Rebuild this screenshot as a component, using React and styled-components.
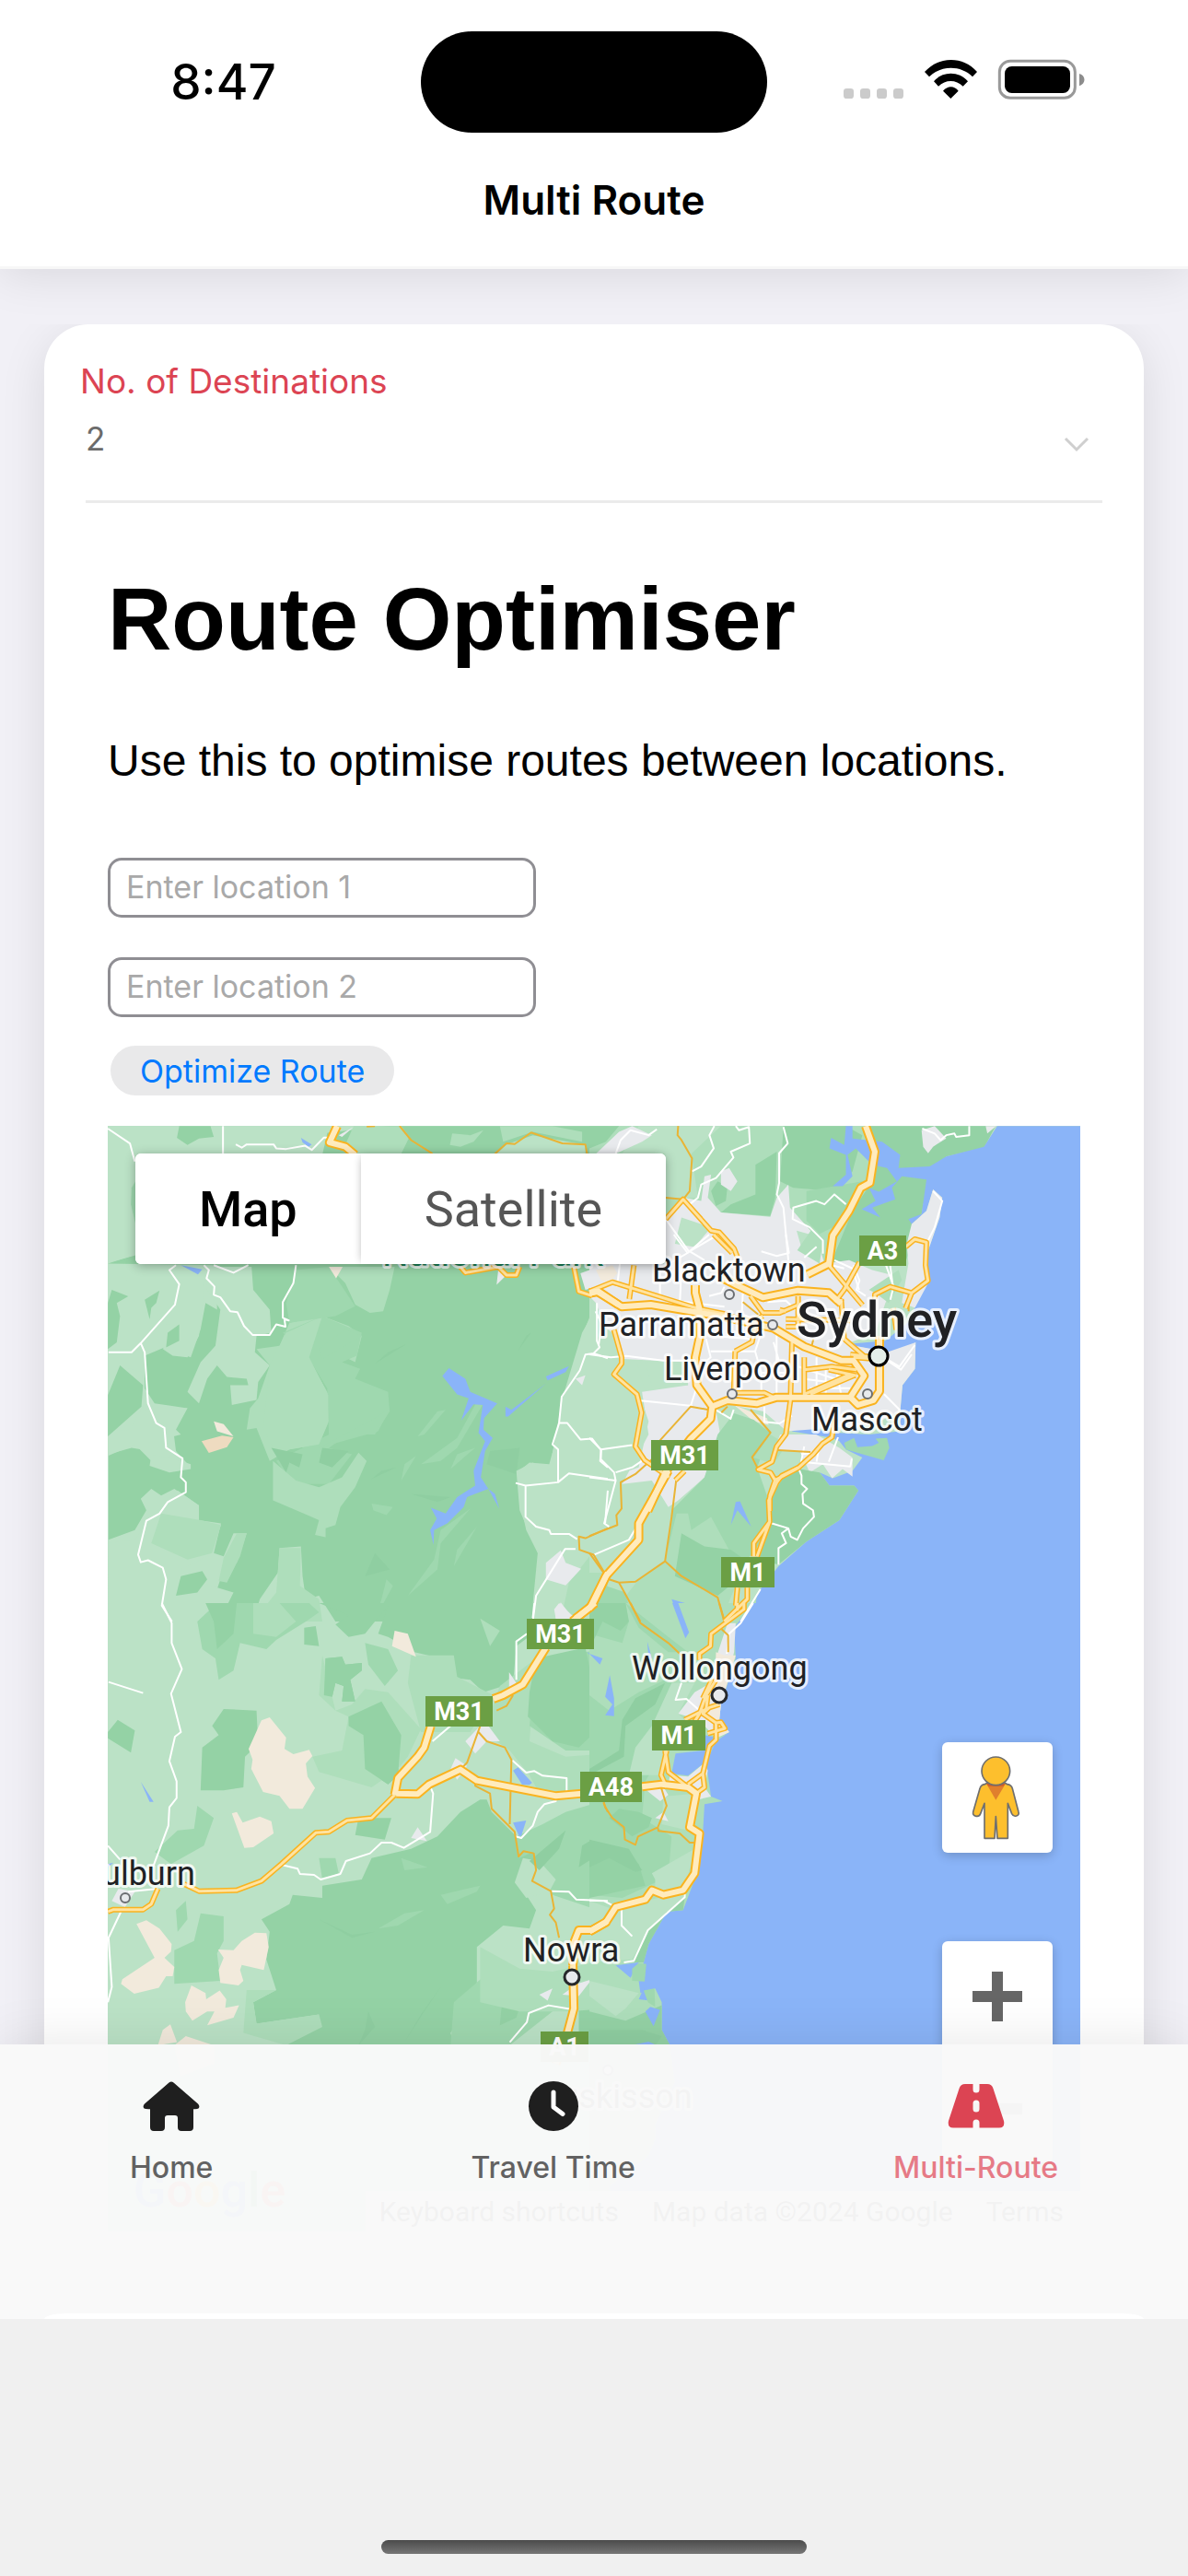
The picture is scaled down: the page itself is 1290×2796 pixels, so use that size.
import React, { useState } from "react";
import styled, { createGlobalStyle } from "styled-components";

const ui = 'Inter, "Liberation Sans", sans-serif';
const mapFont = 'Roboto, "Liberation Sans", sans-serif';
const webFont = '"Liberation Sans", Arial, sans-serif';

const GlobalStyle = createGlobalStyle`
  *, *::before, *::after { box-sizing: border-box; }
  body { margin: 0; background: #f0f0f0; font-family: ${ui}; }
`;

const Screen = styled.div`
  position: relative;
  display: flex;
  flex-direction: column;
  height: 100vh;
  overflow: hidden;
  background: #f1f0f6;
`;

const Header = styled.header`
  position: relative;
  z-index: 1;
  flex: none;
  background: #fff;
  border-bottom: 3px solid #f7f7f7;
  box-shadow: 0 6px 48px rgba(0, 0, 0, 0.1);
`;

const StatusBar = styled.div`
  display: grid;
  grid-template-columns: 1fr 376px 1fr;
  align-items: center;
  padding-top: 34px;
`;

const Clock = styled.time`
  justify-self: center;
  padding-left: 28px;
  font-size: 53px;
  font-weight: 500;
  line-height: 110px;
`;

const Island = styled.div`
  height: 110px;
  border-radius: 55px;
  background: #000;
`;

const Indicators = styled.svg`
  justify-self: end;
  width: 300px;
  height: 80px;
  margin-right: 90px;
  margin-top: 2px;
`;

const Title = styled.h1`
  height: 145px;
  margin: 0;
  padding-top: 40px;
  font-size: 44px;
  font-weight: 600;
  line-height: 66px;
  text-align: center;
`;

const Scroller = styled.main`
  flex: 1;
  padding: 60px 48px 0;
  overflow: hidden;
`;

const Card = styled.section`
  height: 2140px;
  padding: 38px 38px 0;
  border-radius: 48px;
  background: #fff;
  box-shadow: 0 12px 50px rgba(0, 0, 0, 0.1);
  clip-path: inset(0 -48px -80px);
`;

const Field = styled.div`
  position: relative;
  display: flex;
  flex-direction: column;
`;

const FieldLabel = styled.label`
  padding-left: 1px;
  color: #dc4453;
  font-size: 37px;
  line-height: 48px;
`;

const Select = styled.select`
  height: 108px;
  margin: 0 7px;
  padding: 0 0 29px;
  appearance: none;
  border: 0;
  border-bottom: 3px solid #ebebeb;
  border-radius: 0;
  background: transparent;
  color: #6b6b6b;
  font: 400 35px ${ui};
`;

const Chevron = styled.svg`
  position: absolute;
  right: 20px;
  bottom: 54px;
  width: 30px;
  height: 20px;
  pointer-events: none;
`;

const WebContent = styled.div`
  padding: 0 31px;
  font-family: ${webFont};
`;

const Heading = styled.h2`
  margin: 0;
  padding-top: 71px;
  font-size: 96px;
  line-height: 110px;
`;

const Lead = styled.p`
  margin: 0;
  padding: 70px 0 76px;
  font-size: 48px;
  line-height: 58px;
`;

const Form = styled.form`
  display: flex;
  flex-direction: column;
  align-items: flex-start;
`;

const TextInput = styled.input`
  width: 465px;
  height: 65px;
  margin-bottom: 43px;
  padding: 0 17px 2px;
  border: 3px solid #8f8e93;
  border-radius: 15px;
  background: #fff;
  font: 400 34px ${ui};
  &::placeholder { color: #a9a9a9; opacity: 1; }
`;

const SubmitButton = styled.button`
  height: 54px;
  margin: -12px 3px 33px;
  padding: 0 32px;
  border: 0;
  border-radius: 27px;
  background: #e9e9ea;
  color: #007aff;
  font: 400 34px ${ui};
`;

const MapFrame = styled.div`
  position: relative;
  height: 1200px;
  overflow: hidden;
  font-family: ${mapFont};
`;

const MapDrawing = styled.svg`
  display: block;
  width: 100%;
  height: 100%;
  font-family: ${mapFont};
`;

const MapTypes = styled.div`
  position: absolute;
  top: 30px;
  left: 30px;
  display: flex;
  height: 120px;
  border-radius: 6px;
  background: #fff;
  box-shadow: 0 2px 12px rgba(0, 0, 0, 0.3);
`;

const MapType = styled.button`
  padding: 0 69px;
  border: 0;
  border-radius: 6px;
  background: #fff;
  color: ${(p) => (p.$active ? "#000" : "#565656")};
  font: ${(p) => (p.$active ? 500 : 400)} 54px ${mapFont};
  & + & { box-shadow: -3px 0 10px -4px rgba(0, 0, 0, 0.3); border-radius: 0 6px 6px 0; }
`;

const MapControls = styled.div`
  position: absolute;
  top: 669px;
  right: 30px;
  display: flex;
  flex-direction: column;
  gap: 96px;
`;

const ControlBox = styled.div`
  display: flex;
  flex-direction: column;
  border-radius: 6px;
  background: #fff;
  box-shadow: 0 3px 12px rgba(0, 0, 0, 0.2);
`;

const ControlButton = styled.button`
  width: 120px;
  height: 120px;
  padding: 0;
  border: 0;
  background: transparent;
  svg { display: block; width: 120px; height: 120px; }
`;

const MapLogo = styled.div`
  position: absolute;
  bottom: 14px;
  left: 28px;
  font: 500 52px/60px ${mapFont};
`;

const LogoLetter = styled.span`
  color: ${(p) => p.$color};
`;

const MapCredits = styled.div`
  position: absolute;
  right: 0;
  bottom: 0;
  display: flex;
  gap: 36px;
  height: 44px;
  padding: 0 18px 0 15px;
  align-items: center;
  background: #f1f1f1;
  color: #000;
  font: 400 30px ${mapFont};
`;

const BottomArea = styled.footer`
  position: absolute;
  z-index: 2;
  right: 0;
  bottom: 0;
  left: 0;
`;

const TabBar = styled.nav`
  display: flex;
  justify-content: space-between;
  align-items: flex-start;
  position: relative;
  height: 298px;
  padding: 36px 141px 0;
  background: rgba(249, 249, 249, 0.974);
  box-shadow: 0 0 54px rgba(0, 0, 0, 0.1);
`;

const Tab = styled.a`
  display: flex;
  flex-direction: column;
  align-items: center;
  gap: 14px;
  color: ${(p) => (p.$active ? "#e67a86" : "#626262")};
  font-size: 32px;
  font-weight: 500;
  line-height: 40px;
  text-decoration: none;
  svg { width: 64px; height: 64px; color: ${(p) => (p.$active ? "#dc4453" : "#1f1f1f")}; }
`;

const NextCardEdge = styled.div`
  position: absolute;
  right: 48px;
  bottom: 0;
  left: 48px;
  height: 6px;
  border-radius: 24px 24px 0 0 / 6px 6px 0 0;
  background: #fff;
`;

const HomeArea = styled.div`
  position: relative;
  display: flex;
  justify-content: center;
  align-items: flex-end;
  height: 279px;
  padding-bottom: 24px;
  background: #f0f0f0;
`;

const HomeIndicator = styled.div`
  width: 462px;
  height: 15px;
  border-radius: 8px;
  background: linear-gradient(#4b4b4b, #767676);
`;

/* The map is surveyed in five sheets, each with its own grid. */
const sheets = {
  nw: "translate(100 1200) scale(.3571)",
  ne: "translate(640 1200) scale(.3571)",
  sw: "translate(100 1740) scale(.3571 .3333)",
  se: "translate(640 1740) scale(.3571 .3333)",
  city: "translate(640 1340) scale(.3333)",
};

const C = {
  light: "#bbe2c6",
  soft: "#aedebb",
  mid: "#9fd8af",
  dark: "#94d2a5",
  deep: "#8fcea1",
  sea: "#8ab4f8",
  town: "#e8eaed",
  sand: "#f2eadc",
};

const areas = [
  // north-west ranges
  ["nw", C.dark, "M48 480L140 450L140 146L900 62L1568 62V480L1530 600L1490 700L1490 780L1430 880L1415 1000L1390 1090L1330 1085L1298 1110L1300 1200L1320 1290L1355 1360L1335 1568H740L690 1490L650 1500L640 1430L635 1340L570 1345L565 1420L510 1500L490 1568H440L380 1470L400 1410L440 1390L470 1300L430 1300L400 1370L370 1360L392 1270L325 1260L325 1215L250 1165L210 1185L180 1165L148 1195L165 1230L130 1290L50 1320V1060L120 1040L180 1050L200 1090L300 1100L255 1050L245 970L290 920L190 905L160 860L160 760L220 735L300 765L330 680L345 600L380 620L380 485Z"],
  ["nw", C.light, "M48 62H720L700 150H48V470L130 450L120 146H48Z"],
  ["nw", C.light, "M48 146H132V455L48 478Z"],
  ["nw", C.mid, "M120 250L132 230V360L118 300Z"],
  ["nw", C.dark, "M265 62H360L370 95L325 100L290 120L258 98Z"],
  ["nw", C.soft, "M795 62H940L965 95L940 146H790L770 120Z"],
  ["nw", C.soft, "M1095 85L1150 90L1190 75L1160 110L1120 125L1088 120ZM1240 62L1400 62L1490 80L1490 110L1340 80L1250 110Z"],
  ["nw", C.light, "M1340 90L1500 120L1500 146H1230L1260 118Z"],
  ["nw", C.light, "M130 490L240 485L265 543L252 605L180 650L165 580L195 560L150 600L180 660L140 760L75 690L80 570Z"],
  ["nw", C.light, "M255 485L345 490L340 560L325 700L290 765L245 760L215 740L260 670L200 660L252 605Z"],
  ["nw", C.light, "M340 490H485L490 560L540 620L545 690L500 700L495 750L540 790L505 840L500 895L425 910L420 850L475 850L470 830L410 825L380 790L350 830L325 905L290 870L330 780L375 730L390 620L350 560Z"],
  ["nw", C.light, "M80 790L150 810L160 870L130 940L180 915L290 920L255 985L270 1000L230 1010L240 1090L180 1080L130 1030L48 1065V990L115 985L155 915L80 890Z"],
  ["nw", C.dark, "M60 560L110 580L75 600L85 640L75 720L48 740V600ZM48 880L85 790L155 850L150 915L48 1005Z"],
  ["nw", C.dark, "M160 590L205 562L195 600L180 615L175 650ZM230 690L265 665V715L225 735Z"],
  ["nw", C.light, "M180 1060L270 1080L300 1090V1105L235 1115L175 1095Z"],
  ["nw", C.soft, "M500 740L570 730L600 660L700 640L780 670L820 700L800 780L760 760L660 770L720 880V960L690 1030L600 1045L540 1080L500 980L470 985L480 920L505 890L540 790Z"],
  ["nw", C.mid, "M580 690L700 640L820 690L805 760L760 780L815 800L800 830L900 870L905 930L860 1000L780 1000L720 1040L790 1060L720 1150L610 1150L560 1080L640 1040L720 1000L715 860L660 770Z"],
  ["nw", C.soft, "M590 690L700 640L660 765L718 880V960L690 1030L600 1045L560 1060L520 980L540 790Z"],
  ["nw", C.deep, "M545 1040L640 1060L630 1100L600 1085L590 1115ZM700 1040L780 1050L730 1100L690 1085Z"],
  ["nw", C.soft, "M550 1080L620 1140L690 1160L760 1130L810 1055L835 1080L800 1160L755 1220L740 1275L710 1285V1312L678 1305L690 1260L655 1245L550 1200Z"],
  ["nw", C.soft, "M720 490H920L905 560L885 625L845 630L800 605L770 540Z"],
  ["nw", C.mid, "M620 500L720 490L800 610L740 640L600 660L590 600Z"],
  ["nw", C.light, "M50 1330L130 1320L170 1260L260 1170L325 1215L310 1265L392 1275L350 1370L270 1410L330 1450L430 1480L400 1540L490 1568H48Z"],
  ["nw", C.soft, "M210 1240L330 1260L392 1275L365 1360L290 1380L180 1330ZM400 1375L440 1300L470 1300L450 1370L410 1450L385 1445ZM570 1345H635L632 1460L690 1500L700 1568H490L560 1480Z"],
  ["nw", C.dark, "M270 1430L335 1415L350 1440L320 1480L255 1490Z"],
  ["nw", C.mid, "M1050 930L1075 925L1010 1000L990 1005ZM1170 900L1190 905L1110 1040L1060 1080L1000 1090L1110 1010ZM1165 1040L1090 1105L1110 1060ZM950 1090L985 1065L940 1140ZM1150 1225L1060 1330L1050 1410L960 1490L1040 1380L1060 1290ZM1170 1280L1100 1400L1110 1350ZM850 1210L915 1220L895 1245L855 1230ZM770 680L820 700L700 770L690 740ZM860 950L905 920L870 990L690 1040ZM895 1440L915 1460L860 1560L880 1500Z"],
  ["nw", C.deep, "M955 725L860 785L900 750ZM1335 690L1295 745L1320 700ZM970 1180L1090 1190L1050 1205ZM860 1360L905 1410L830 1430ZM925 1100L850 1135L880 1110ZM1210 1050L1300 1040L1290 1120L1200 1090Z"],
  ["nw", C.light, "M1490 690L1540 600H1568V1568H1335L1360 1370L1300 1230L1290 1110L1340 1085L1390 1110L1430 890Z"],
  ["nw", C.soft, "M1450 1450L1568 1300V1500L1460 1568L1430 1540Z"],
  ["nw", C.sea, "M1065 822L1085 798L1135 830L1150 870L1232 905L1192 950L1190 985L1218 1010L1195 1050L1182 1130L1205 1165L1140 1190L1130 1220L1080 1270L1040 1290L1038 1335L1028 1290L1048 1255L1030 1222L1075 1240L1110 1190L1165 1155L1160 1110L1195 1020L1175 995L1188 910L1160 908L1122 958L1145 890L1110 878ZM1205 1165L1225 1180L1238 1225ZM1257 915L1275 925L1380 845L1265 945H1257ZM1380 823L1450 792L1440 810L1385 835ZM270 485L335 498L322 513ZM635 98L668 118L658 125L640 112Z"],
  ["nw", C.town, "M750 90L795 65L760 95ZM1470 830L1500 820L1490 850ZM1380 1390L1425 1352L1440 1390L1487 1408L1440 1458L1380 1440ZM1410 1540L1425 1510L1470 1568H1410ZM1485 510L1540 490L1568 540L1500 560ZM1530 146L1568 120V146ZM1235 500L1260 515L1230 545Z"],
  ["nw", C.sand, "M370 960L400 968L430 1005L380 990Z M720 490H762L742 525Z"],
  ["nw", "#eedbc0", "M333 1020L395 1003L430 1008L410 1038L355 1056Z"],

  // Sydney basin
  ["ne", C.soft, "M0 62H850V480H0Z"],
  ["ne", C.light, "M150 62H400L310 146L330 280L230 280V146H100ZM0 560L120 700L180 900L130 1100L250 1130L150 1270L60 1420H0Z"],
  ["ne", C.dark, "M0 62H90L50 110L0 130ZM590 62H780L830 90L800 200L740 260L620 250L580 230ZM505 180L570 140L565 280L550 335L400 325L430 300L505 270ZM370 260L390 230L420 245L415 290L385 305Z"],
  ["ne", C.mid, "M660 260L830 230L800 310L740 370L700 390L660 350Z"],
  ["ne", C.dark, "M850 62H1235L1200 128L1085 155L1030 225L1010 330L960 480L730 490L800 320L860 230Z"],
  ["ne", C.sea, "M780 62H800V100L890 110L945 150L940 190L1035 185L1085 155L1200 125L1240 62H1500V1516H492L520 1470L575 1400L660 1325L760 1260L818 1170L805 1155L730 1155L700 1115L740 1133L800 1110L830 1070L780 1045L760 1020L740 1010L615 990L650 980L760 995L850 1000L945 990V930L952 850L990 800L992 720L960 760L780 725L900 715L980 650L990 610L1028 540L1020 470L1065 340L1073 280L1045 255L1025 320L980 360L970 345L1010 330L1025 225L950 215L920 250L930 285L860 310L885 340L828 315L870 290L850 250L880 262L935 230L905 190L860 180L810 130L785 150L800 215L770 245L740 245L780 210L780 150L730 130L735 98L775 120Z"],
  ["ne", C.town, "M1045 255L1073 280L1065 340L1020 470L1030 540L990 615L950 600L970 480L965 420L980 360L1025 320ZM1010 75L1050 62L1085 100L1045 125L1030 145L1015 125ZM1205 62H1237L1210 85Z"],
  ["ne", C.town, "M232 345L290 280L340 290L350 215L370 210L360 280L400 325L550 338L570 280L605 240L610 310L690 400L715 480L790 470L860 500L940 520L900 600L870 690L780 725L860 740L905 750L992 720L990 800L952 850L945 930L860 970L600 990L530 930L380 900L400 1010L350 1130L270 1200L240 1220L190 1140L100 1150L180 1000L160 870L300 850L300 780L100 770L60 700L20 600L0 580V480H232ZM400 200L425 190L450 230L430 260L400 240ZM20 146L90 80L130 62L190 90L160 110L80 146Z"],
  ["ne", C.light, "M0 640L70 690L100 770L130 860L160 900L180 960L150 1100L0 1150ZM170 780L290 790L300 850L190 850ZM280 340L370 370L320 430L260 420ZM630 380L700 400L700 470L650 450ZM920 550L960 560L940 600L910 590Z"],
  ["ne", C.soft, "M632 440L680 370L710 410L700 480ZM850 560L940 500L950 530L910 600L870 570Z"],
  ["ne", C.sand, "M20 500L70 485L85 510L60 540L35 530ZM440 910L540 950L545 970L500 960Z"],
  ["ne", C.mid, "M390 1000L440 935L500 955L550 995L510 1100L545 1200L550 1270L500 1360L400 1440L280 1430L235 1380L250 1230L350 1130Z"],
  ["ne", C.soft, "M230 1385L265 1240L300 1240L310 1290L370 1250L430 1360L410 1440L520 1390L500 1568H50L150 1440ZM500 1070L550 1000L600 1030L560 1090Z"],
  ["ne", C.town, "M580 1000L690 1000L760 1040L800 1070V1128L770 1105L738 1133L710 1090L670 1115L640 1050L560 1050Z"],
  ["ne", C.light, "M580 1080L640 1060L650 1100L600 1115L570 1140Z"],
  ["ne", C.dark, "M590 1130L640 1105L700 1115L730 1155L805 1155L818 1170L760 1260L660 1325L575 1395L510 1380L545 1280V1200ZM280 1300L350 1340L430 1350L500 1400L390 1490L260 1430Z"],
  ["ne", C.mid, "M775 1025L805 1010L815 1038L860 1035L880 1025L870 1012L905 1010L912 1040L895 1078L780 1045Z"],
  ["ne", C.mid, "M0 1568L50 1460L110 1480L130 1568Z"],
  ["ne", C.light, "M440 1470L520 1465L460 1568H400Z"],
  ["ne", C.sea, "M430 1275L445 1205L458 1203L492 1280L450 1230ZM250 1500L345 1528L310 1530L270 1520L290 1568L275 1568Z"],

  // southern highlands
  ["sw", C.mid, "M320 60L380 0H660L690 30L650 60L560 120L530 150L450 130L430 220L385 250L375 180L335 150Z"],
  ["sw", C.dark, "M345 0H440L430 100L380 150L370 60ZM690 0H1340L1340 100L1290 140L1280 260L1190 290L1150 250L1080 240L1100 190L980 160L900 110L870 100L900 10L860 60L830 100L780 110L740 70L780 40ZM645 80L680 75L690 140L645 135ZM710 180L760 175L770 200L820 195L820 220L785 250L800 320L760 320L765 270L740 260L730 305L705 300ZM48 420L78 380L130 415L118 487L48 440ZM365 400L400 345L500 350L505 460L465 500L460 600L400 610L330 610L335 470L385 430ZM780 370L880 320L940 430L930 560L900 590L830 540L825 430L780 400Z"],
  ["sw", C.soft, "M490 0H570L620 60L560 110L490 100ZM700 170L690 300L740 350L790 330L830 280L900 290L1000 410L960 500L930 540L850 600L690 550L670 500L760 480L780 370L740 350ZM1180 50L1240 90L1210 140ZM970 170L1100 170L1110 240L1220 300L1150 420L1000 420L960 260ZM1240 270L1350 180L1330 450L1440 500L1568 490V640L1360 620L1330 560L1270 480L1190 420Z"],
  ["sw", C.dark, "M780 370L880 320L940 430L930 560L900 590L830 540L825 430L780 400ZM710 180L760 175L770 200L820 195L820 220L785 250L800 320L760 320L765 270L740 260L730 305L705 300Z"],
  ["sw", C.mid, "M830 130L900 150L930 220L890 270L840 200ZM1350 180L1568 150V480L1440 480L1330 400ZM320 660L370 700L340 790L240 850L190 810L260 740L310 735ZM1440 680L1568 640V1010L1400 950L1350 870L1300 830L1290 760L1370 720Z"],
  ["sw", C.dark, "M1350 180L1500 145L1530 300L1520 430L1480 470L1400 450L1325 370L1330 290ZM810 700L910 700L890 770L800 755ZM1180 640L1200 640L1215 680L1290 760L1300 830L1340 810L1350 870L1290 900L1350 1000L1330 1060L1250 1050L1170 1120L1170 1270L1090 1400L1100 1440H580L690 1340L500 1370L490 1300L560 1260L530 1160L540 1070L515 1030L600 980L610 950L700 960L700 920L820 900L850 830L970 800L1050 760L1120 680Z"],
  ["sw", C.mid, "M690 830L740 830L750 880L700 900ZM255 1000L285 970L290 1030L260 1070ZM330 1010L400 1020L400 1100L380 1140L390 1230L250 1240L250 1130L310 1100ZM1100 1300L1230 1180L1330 1200L1400 1330L1270 1440H1090Z"],
  ["sw", C.dark, "M1250 1260L1310 1280L1290 1350L1240 1375ZM1480 1320L1568 1290V1440H1480Z"],
  ["sw", C.soft, "M1180 1120L1300 1190L1400 1200L1568 1160V1320L1450 1330L1300 1330L1180 1300ZM470 1260L560 1260L490 1300L500 1370L690 1340L700 1380L590 1440L460 1400Z"],
  ["sw", C.light, "M1310 830L1360 840L1410 900L1390 940L1320 960L1285 910Z"],
  ["sw", C.mid, "M870 1060L950 1010L1010 1000L930 1050ZM1060 950L1180 920L1170 940L1080 980ZM940 830L1020 860L950 870Z"],
  ["sw", C.deep, "M1060 1250L1010 1330L950 1430L1000 1340ZM840 1330L860 1380L810 1440L830 1390ZM690 1030L790 1080L860 1070L790 1090ZM1330 840L1440 740L1420 800L1360 870ZM1490 790L1568 740V800L1480 860Z"],
  ["sw", C.sand, "M540 372L590 438L585 475L612 492L660 478L670 498L650 522L655 565L678 602L640 670H600L570 628L520 615L484 540L488 510L476 475L515 382ZM425 685L440 680L458 715L510 695L545 710L552 750L490 795L463 797ZM920 90L960 100L985 175L912 140ZM135 1045L165 1033L205 1060L242 1110L240 1135L220 1155L250 1185L245 1215L225 1215L203 1253L128 1272L88 1240L92 1225L190 1155ZM383 1128L430 1130L455 1100L495 1073L530 1075L537 1120L522 1195L455 1178L450 1195L460 1230L445 1245L390 1237L385 1195L400 1155ZM283 1300L302 1245L345 1270L347 1290L388 1262L408 1290L405 1318L447 1310L430 1350L350 1375L372 1330L350 1330L305 1360L285 1330ZM215 1390L238 1372L258 1430L200 1440ZM250 1440L285 1410L370 1440V1500L270 1540Z"],
  ["sw", C.town, "M1268 225L1290 260L1268 280ZM1180 400H1205L1240 450L1200 450L1165 490L1135 450ZM1090 540L1105 505L1140 530L1110 575ZM970 765L990 730L1018 775ZM60 970L80 930L130 940L100 990ZM1360 1275L1400 1255L1385 1295ZM1430 1275L1475 1240L1520 1225L1480 1280ZM1405 20L1420 0L1470 50H1410Z"],
  ["sw", C.sea, "M1280 545L1295 535L1338 585L1330 592H1308ZM1280 715L1320 708L1305 758H1298ZM148 582L187 647H175ZM1505 160L1550 180L1545 200ZM1568 230L1560 305L1568 305ZM48 850L65 845L48 860Z"],

  // Illawarra and Shoalhaven
  ["se", C.sea, "M300 0H1500V2060H40V960L300 900Z"],
  ["se", C.soft, "M0 0H498L440 80L445 180L400 330L395 380L425 420L385 450L355 520L370 630L405 645L350 655L345 750L335 850L320 900L285 1000L235 1005L180 1110L165 1170L150 1230L155 1270L200 1255L220 1300V1390L245 1440L260 1560L200 1700L220 2100H0Z"],
  ["se", C.mid, "M0 300L60 350L150 290L230 250L280 270L260 420L170 580L160 700L250 760L240 890L100 960L0 950ZM0 0H110L120 60L100 130L0 100ZM110 0L240 110L300 160L240 160L150 80Z"],
  ["se", C.dark, "M0 0H110L120 60L95 90L40 60L0 150ZM0 800L90 810L150 850L170 920L0 960ZM0 1330L110 1360L220 1310L220 1390L245 1440H0ZM150 680L190 700L180 730L130 760L60 700L90 670Z"],
  ["se", C.light, "M250 260L320 260L270 360L290 380L190 400L190 480L230 480L210 560L120 560L140 470L190 400ZM0 970L80 1000L50 1040L0 1070ZM225 630L320 620L300 740L220 720ZM100 990L280 940L290 960L180 1065L130 1160L0 1170L0 1080ZM200 900L190 880L320 800L290 930L200 940ZM0 1230L150 1270L110 1320L80 1345L0 1280Z"],
  ["se", C.dark, "M178 1065L290 958L285 1000L235 1005L180 1110L165 1170H135Z"],
  ["se", C.deep, "M100 380L140 310L230 260L200 330L110 400L105 500L0 560L0 540L90 480ZM0 770L120 800L160 870L140 875L60 830L0 860ZM0 1390L160 1390L220 1410L200 1440H0Z"],
  ["se", C.town, "M420 65H445L440 160L400 330L395 380L425 420L385 440L350 400L300 370L270 360L320 290L370 260L385 180ZM245 560L300 565L350 520L360 545L350 600L370 630L330 640L300 600L240 590ZM160 598L220 590L240 625L215 645ZM200 700L225 680L240 710Z"],
  ["se", C.sand, "M385 160L410 170H445L400 330L395 380L425 420L380 440L375 390L355 360L380 320Z"],
  ["se", C.sea, "M350 430L375 435L385 450L350 520L300 562L250 555L262 490L350 480ZM252 0H270L303 95L292 115ZM0 165L40 180L32 200ZM62 235L75 310V368L48 365L70 330L48 305ZM176 125L190 180H180ZM80 1180L150 1170L125 1220ZM150 1290L165 1255L185 1295ZM170 1330L185 1315L215 1325L195 1378ZM140 1437L180 1428L205 1440Z"],
  ["se", C.mid, "M130 1190L150 1172L173 1175L168 1232L130 1230ZM165 1262L198 1255L200 1315L178 1300Z"],
  ["se", C.sea, "M245 1437H1500V2060H100L60 1900L180 1800L270 1560Z"],
];

const whiteRoads = {
  nw: "M48 70L115 115L130 170M398 62V146M437 118L455 128L470 118H552L560 130L590 132L648 122L668 135L705 97H722M255 485L235 500L265 543L252 605L148 722L120 750H50M148 722L160 750L170 905L195 965L220 980L225 1040L275 1072L270 1130L285 1145V1175L230 1205L205 1240L165 1262L140 1365L148 1388L170 1382L215 1405L225 1440L212 1520L243 1568M340 485L355 500L348 525L372 550L370 575L390 583L420 625L442 628L462 670L488 697H540L560 665L588 672L585 650L598 653L580 645V597L612 540L620 485M370 485L430 508L475 485M1535 600V715L1543 735L1525 753L1500 757L1483 805L1428 885L1420 965L1400 1030L1417 1045V1145L1318 1155L1288 1147M1318 1155V1250L1350 1280L1390 1290L1395 1302H1450L1475 1318M1417 1145L1450 1118L1568 1135M1420 965H1445L1485 1015L1520 1012L1548 1048L1545 1080L1568 1100M1525 753L1568 768M1470 1348H1438L1350 1490L1340 1568M1568 1170L1560 1270",
  sw: "M212 0L242 65V130L273 215L240 295L270 420L252 435L235 515L257 580V635L235 665L232 725L185 860M50 257L155 293M48 790L85 835M90 1000L50 1090L60 1250L48 1300M110 940L200 930M575 852L625 865L632 882L675 885L695 900L755 882L772 840L845 815L880 780H910L948 797L1028 745L1037 620L1028 597M1345 0L1340 48M1322 100L1290 125V250M1090 400L1035 450M1278 512L1320 552L1345 547L1370 562L1443 570V620M1410 632V645L1375 655L1355 680L1340 725L1305 765L1288 760M1398 938L1450 940L1472 965L1568 970M1460 1323L1388 1310L1328 1335L1322 1365L1270 1430",
  se: "M0 968L45 970L80 990L98 1000V1050L130 1085M290 935V958L178 1065L135 1165L105 1170M498 0L460 65L425 100L418 165M280 260L262 315L295 312L330 345",
  ne: "M590 65L603 115L577 145V235L570 270L590 310L605 470M380 62L365 90L378 130L340 185L312 200M445 62L455 75L485 65L488 115L430 140L438 158L385 220L340 240L330 280L305 300M780 300L745 270L715 300L690 290L620 310L618 345L670 370L710 410V450M80 146L95 105L125 75L180 90L205 72M232 345L300 440L350 470M395 390L310 440M1012 70L1050 85L1068 105L1085 90L1110 85L1115 95L1155 90V62M1045 260L1073 290L1050 370L1030 410M0 1010L35 1045V1075L75 1115L80 1140L45 1270L60 1280M35 1045L130 1032M80 1115L130 1100L160 1080M0 1130L80 1140M635 1100L645 1125V1150L662 1165L648 1180L650 1210L680 1230L683 1250L650 1285L632 1320L612 1310L605 1285L555 1270M605 1285L585 1300L598 1330L575 1345V1395M15 1365L120 1320L150 1270L175 1205M900 480L925 550L915 590M745 470L800 495L820 560M520 1470L460 1568",
  city: "M275 0L320 60M390 0L320 60L250 100M0 390L70 400L120 395L240 410L340 410M30 360L40 290L20 250M160 540L335 558M355 480L330 558M90 170L100 90M230 90L230 210M300 110L295 215M230 210L440 235M390 200L430 190L440 170M500 190L495 290M380 340L395 400L350 440M400 330L530 340M395 380H540M560 320L540 380L560 450V520M610 320V530M560 450H640M740 400V530M770 440V530M700 470L780 480L860 440M720 500H850M680 430L830 480M800 420L820 520M960 400L1010 430L1060 360M970 410L1015 440L1050 390M960 520L1010 570L1000 600M570 560V610L620 615L660 590M410 570L460 600L470 570M700 690L690 740L850 755L855 730M780 740L810 660M740 740L745 710L690 715M560 55L610 70L650 60L640 0M700 75L740 40M860 100L880 150L870 180L900 200M790 100L830 110M990 180L980 100L960 60M580 220L640 215L700 270M500 260L640 320M640 340L760 380M620 420L600 350",
};

const minorRoads = {
  nw: "M935 62L970 105L1035 146M1225 146L1260 115L1285 117L1335 82L1430 115L1500 118L1505 146M1568 1285L1500 1315L1480 1310L1482 1350L1525 1365L1555 1415M835 64L860 62",
  ne: "M270 62L268 90L280 105L312 160L305 260L285 285L232 280M0 1308L85 1275L82 1245L98 1225L95 1145L140 1120L190 1075M265 1130L250 1250L230 1385L280 1430L390 1495L410 1568M230 1385L140 1447L90 1450L60 1440L40 1415L0 1360M90 1450L155 1568",
  sw: "M1180 400L1140 520L1120 542M1175 420L1200 450L1255 470L1275 510L1270 720M1165 580V595L1210 620L1215 670L1285 745L1297 825L1312 808L1343 815L1350 870L1338 905L1395 938L1405 995L1392 1015L1410 1040L1420 1090M1555 650L1568 680M1230 350L1260 335L1280 300",
  se: "M125 0L155 65L240 130L280 170M42 640L48 665L70 700L105 730L108 770L140 787L148 760L208 730L235 660L218 600M208 730L210 742L275 750L305 780L325 780M395 0L410 55M402 85L422 105V160M335 760V800",
  city: "M230 670L330 560L385 570M525 570L590 645L530 725L550 765M615 702L720 708M450 560L430 580M1040 190V250M730 340L720 380M500 220L550 260",
};

const trunkRoads = {
  nw: "M1120 490L1135 508L1235 490L1260 515H1290L1300 490M1465 490L1480 565L1520 578",
  ne: "M232 345L285 285L370 380L395 385L440 435L450 460M635 1100L585 1125L570 1145L545 1200L548 1265L500 1330V1370M548 1265L510 1370M480 1465V1500L410 1568M450 1465L445 1520",
  sw: "M920 625L850 700L775 708L720 745L680 748L575 850L515 905L440 935L325 938L280 915M200 930L180 980L155 998L65 998L48 1005",
  se: "M470 0V20L370 100L368 140L335 165V185M450 0V25M385 250L355 300L335 360L320 385M372 250L345 310M360 300L355 345L290 380M235 480L218 560L235 600M230 480L240 550L300 600M300 590L345 555L350 600L325 620M345 555L365 465L385 445V390L345 360L365 340L395 330M385 390L400 388L412 408L360 425",
  city: "M780 100L890 230M880 90L830 180L800 220M1030 40L1060 15L1098 25L1095 100L1103 150L1050 190L980 170L930 195V210M1050 190L1030 240M0 185L75 155L350 240L450 260M130 210L145 100M80 310L105 400V420L80 455L155 520L170 580L150 690L180 735L260 790M475 380L470 520M475 380L530 350L540 300M525 200L565 255H620L690 225M565 265L540 280M640 250L620 245M660 350L655 540L640 650L610 690L595 740L550 765L590 775L605 800L588 850V900M700 400V530M700 440L790 430L870 440M470 515H570L600 530M700 520L850 455M720 520L860 460M605 800L680 760L730 715L760 680L790 660L800 600M405 0L465 60M680 200V300M640 275L850 280M640 300H690M990 240L1000 310M860 400L930 405M850 390L930 400M780 440L870 460M820 210L830 340L900 400M280 800L310 770",
};

const motorways = {
  nw: "M745 62L722 112L770 125L800 150M1515 570L1540 565L1600 605M1568 1420L1520 1520L1460 1568",
  ne: "M840 62L868 140L853 235L825 250L790 320L740 395L727 490M240 1110L150 1270V1320L50 1430L0 1530",
  sw: "M1530 0L1470 50M1380 145L1310 265L1250 300L1220 312M1030 400L1010 470L990 500L930 570L920 625M925 620L990 622L1025 590L1120 542L1170 578L1410 628L1490 620M1462 1180L1467 1100L1480 1065H1520L1568 1035M1462 1180L1465 1320L1445 1400L1410 1500",
  se: "M160 598L220 590L300 600L325 620L305 730L335 750L320 880L285 935L225 950L190 935L170 965L80 990L50 1040L0 1070",
  city: "M0 190L25 185L105 235L200 228L330 250L440 268L600 305L700 365L820 410H860L895 460L850 530H610L545 550L450 540L400 560L395 600L330 665L250 770L190 900M345 165V190L358 240L360 330L345 400L350 490L400 560M430 140L480 165L565 205L680 182L780 190L820 225M945 330V510L925 540L875 555L850 530M780 95L710 130",
};

function Roads({ set, color, width }) {
  return (
    <g fill="none" stroke={color} strokeWidth={width} strokeLinejoin="round">
      {Object.keys(set).map((key) => (
        <path key={key} d={set[key]} transform={sheets[key]} vectorEffect="non-scaling-stroke" />
      ))}
    </g>
  );
}

const places = [
  { name: "Blacktown", x: 708, y: 1391 },
  { name: "Parramatta", x: 650, y: 1450 },
  { name: "Liverpool", x: 721, y: 1498 },
  { name: "Mascot", x: 881, y: 1553 },
  { name: "Wollongong", x: 686, y: 1823 },
  { name: "Nowra", x: 568, y: 2129 },
  { name: "Goulburn", x: 66, y: 2046 },
  { name: "Huskisson", x: 583, y: 2288 },
  { name: "Sydney", x: 865, y: 1451, city: true },
];

const dots = [
  [792, 1405, 5], [839, 1438, 5], [795, 1513, 5], [942, 1513, 5],
  [781, 1840, 8], [621, 2146, 8], [136, 2060, 5], [660, 2247, 5],
];

const shields = [
  ["M31", 707, 1563, 73], ["M1", 783, 1690, 58], ["A3", 933, 1341, 51],
  ["M31", 572, 1757, 73], ["M31", 462, 1841, 73], ["M1", 708, 1867, 58],
  ["A48", 630, 1923, 67], ["A1", 587, 2205, 52],
];

function Terrain() {
  return (
    <MapDrawing viewBox="117 1222 1056 1200" preserveAspectRatio="xMidYMid slice" role="img" aria-label="Map of the coast south of Sydney">
      <rect x="117" y="1222" width="1056" height="1200" fill={C.light} />
      {areas.map(([sheet, fill, d], i) => (
        <path key={i} d={d} fill={fill} transform={sheets[sheet]} />
      ))}
      <Roads set={whiteRoads} color="#fff" width={2} />
      <Roads set={minorRoads} color="#e9b435" width={2} />
      <Roads set={trunkRoads} color="#fab31f" width={6} />
      <Roads set={motorways} color="#fab31f" width={10} />
      <Roads set={trunkRoads} color="#ffe3a0" width={3} />
      <Roads set={motorways} color="#ffebbd" width={6} />
      <g fontSize="36" fill="#202124" stroke="#fff" strokeOpacity=".8" strokeWidth="6" strokeLinejoin="round" paintOrder="stroke">
        {places.map((p) => (
          <text key={p.name} x={p.x} y={p.y} fontSize={p.city ? 54 : 36} fontWeight={p.city ? 500 : 400}>{p.name}</text>
        ))}
        <text x="415" y="1374" fill="#188055" fontSize="40">National Park</text>
      </g>
      {dots.map(([x, y, r]) => (
        <circle key={x} cx={x} cy={y} r={r} fill="#e8eaed" stroke={r > 5 ? "#26282b" : "#6b6e72"} strokeWidth={r > 5 ? 3 : 2} />
      ))}
      <circle cx="954" cy="1472" r="10" fill="#e4efe9" stroke="#000" strokeWidth="3" />
      {shields.map(([name, x, y, w]) => (
        <g key={`${x}`}>
          <rect x={x} y={y} width={w} height="33" fill="#6b9f44" />
          <text x={x + w / 2} y={y + 26} fontSize="27" fontWeight="700" fill="#fff" textAnchor="middle">{name}</text>
        </g>
      ))}
    </MapDrawing>
  );
}

function StatusIcons() {
  return (
    <Indicators viewBox="0 0 900 240" aria-hidden="true">
      {[48, 102, 156, 210].map((x) => (
        <rect key={x} x={x} y="138" width="33" height="33" rx="10" fill="#cbcbcb" />
      ))}
      <path d="M312 84C358 32 438 32 483 84L468 100C430 62 366 62 327 100ZM342 115C370 81 424 81 453 115L437 131C414 108 380 108 357 131ZM372 146C386 128 410 128 422 146L397 171Z" />
      <rect x="556" y="49" width="246" height="120" rx="35" fill="none" stroke="#999" strokeWidth="9" />
      <rect x="573" y="66" width="213" height="87" rx="23" />
      <path d="M816 90C838 96 838 122 816 130Z" fill="#8c8c8c" />
    </Indicators>
  );
}

function Pegman() {
  return (
    <svg viewBox="69 33 360 360" aria-hidden="true">
      <path d="M208 170Q195 172 192 184L170 260Q168 272 180 274Q190 276 194 266L207 232V346H240L244 275L249 346H283V232L296 266Q301 276 311 273Q321 270 318 260L298 184Q295 172 281 170L268 162H222Z" fill="#fdbf2d" stroke="#6f6f6f" strokeWidth="5" strokeLinejoin="round" />
      <path d="M215 171H274L244 221Z" fill="#e07f2d" />
      <path d="M213 168H276L268 176H220Z" fill="#d15c28" />
      <circle cx="244" cy="127" r="46" fill="#fdbf2d" stroke="#6f6f6f" strokeWidth="5" />
    </svg>
  );
}

const logo = [["G", "#4285f4"], ["o", "#ea4335"], ["o", "#fbbc04"], ["g", "#4285f4"], ["l", "#34a853"], ["e", "#ea4335"]];

export default function App() {
  const [count, setCount] = useState("2");
  const inputs = Array.from({ length: Number(count) }, (_, i) => i + 1);
  return (
    <Screen>
      <GlobalStyle />
      <Header>
        <StatusBar>
          <Clock>8:47</Clock>
          <Island />
          <StatusIcons />
        </StatusBar>
        <Title>Multi Route</Title>
      </Header>
      <Scroller>
        <Card>
          <Field>
            <FieldLabel htmlFor="count">No. of Destinations</FieldLabel>
            <Select id="count" value={count} onChange={(e) => setCount(e.target.value)}>
              <option>2</option>
              <option>3</option>
              <option>4</option>
            </Select>
            <Chevron viewBox="0 0 30 20" aria-hidden="true">
              <path d="M3 4L15 16L27 4" fill="none" stroke="#cfcfcf" strokeWidth="3" />
            </Chevron>
          </Field>
          <WebContent>
            <Heading>Route Optimiser</Heading>
            <Lead>Use this to optimise routes between locations.</Lead>
            <Form onSubmit={(e) => e.preventDefault()}>
              {inputs.map((n) => (
                <TextInput key={n} type="text" aria-label={`Location ${n}`} placeholder={`Enter location ${n}`} />
              ))}
              <SubmitButton type="submit">Optimize Route</SubmitButton>
            </Form>
            <MapFrame>
              <Terrain />
              <MapTypes>
                <MapType type="button" $active>Map</MapType>
                <MapType type="button">Satellite</MapType>
              </MapTypes>
              <MapControls>
                <ControlBox>
                  <ControlButton type="button" aria-label="Street View"><Pegman /></ControlButton>
                </ControlBox>
                <ControlBox>
                  <ControlButton type="button" aria-label="Zoom in">
                    <svg viewBox="0 0 120 120" aria-hidden="true"><path d="M33 54H54V33H66V54H87V66H66V87H54V66H33Z" fill="#666" /></svg>
                  </ControlButton>
                  <ControlButton type="button" aria-label="Zoom out">
                    <svg viewBox="0 0 120 120" aria-hidden="true"><path d="M33 56H87V68H33Z" fill="#666" /></svg>
                  </ControlButton>
                </ControlBox>
              </MapControls>
              <MapLogo>
                {logo.map(([letter, color], i) => (
                  <LogoLetter key={i} $color={color}>{letter}</LogoLetter>
                ))}
              </MapLogo>
              <MapCredits>
                <span>Keyboard shortcuts</span>
                <span>Map data ©2024 Google</span>
                <span>Terms</span>
              </MapCredits>
            </MapFrame>
          </WebContent>
        </Card>
      </Scroller>
      <BottomArea>
        <TabBar>
          <Tab href="#home">
            <svg viewBox="0 0 64 64" aria-hidden="true">
              <path d="M29.500 5.500Q32 3.500 34.500 5.500L61 28.500Q63.500 31.500 61.500 33.500Q60.500 34.500 56 34.300V54Q56 58 52 58H43Q39 58 39 54V44Q39 41 36 41H28Q25 41 25 44V54Q25 58 21 58H13Q9 58 9 54V34.300Q3.500 34.500 2.500 33.500Q.5 31.500 3 28.500Z" fill="currentColor" />
            </svg>
            Home
          </Tab>
          <Tab href="#travel-time">
            <svg viewBox="0 0 64 64" aria-hidden="true">
              <circle cx="32" cy="31" r="27" fill="currentColor" />
              <path d="M32 16V32L42 39.500" fill="none" stroke="#fff" strokeWidth="5" strokeLinecap="round" strokeLinejoin="round" />
            </svg>
            Travel Time
          </Tab>
          <Tab href="#multi-route" $active>
            <svg viewBox="0 0 64 64" aria-hidden="true">
              <path d="M20 7H28.500V13A3.500 3.500 0 0 0 35.500 13V7H44Q49 7 50.500 12L62 47Q63.500 54 57 54.500H35.500V49A3.500 3.500 0 0 0 28.500 49V54.500H7Q.5 54 2 47L13.500 12Q15 7 20 7ZM28.500 28V34A3.500 3.500 0 0 0 35.500 34V28A3.500 3.500 0 0 0 28.500 28Z" fill="currentColor" fillRule="evenodd" />
            </svg>
            Multi-Route
          </Tab>
          <NextCardEdge />
        </TabBar>
        <HomeArea>
          <HomeIndicator />
        </HomeArea>
      </BottomArea>
    </Screen>
  );
}
